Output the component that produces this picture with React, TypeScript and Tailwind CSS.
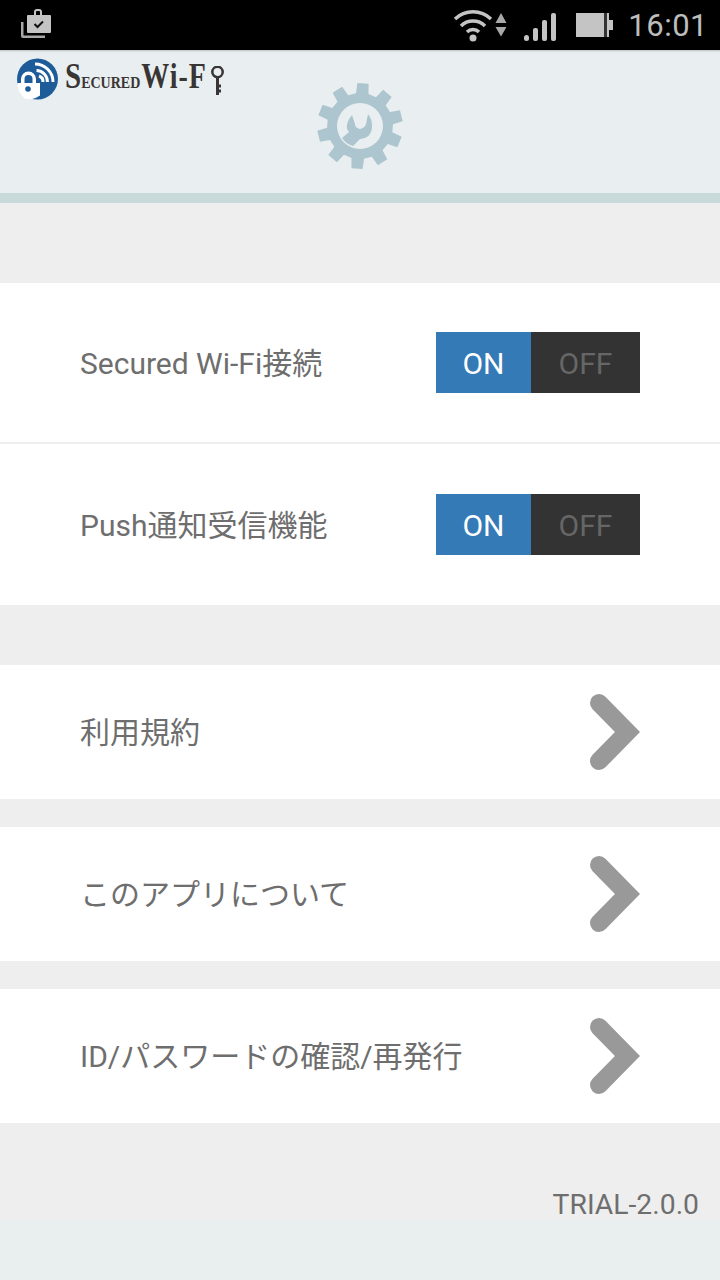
import React from 'react';

const FONT = "font-['Roboto','Noto_Sans_CJK_JP',sans-serif]";

const gearPath = () => {
  const teeth = 10;
  const points: string[] = [];
  for (let i = 0; i < teeth; i++) {
    const a = ((i * 36 + 4 - 90) * Math.PI) / 180;
    const d = (deg: number) => (deg * Math.PI) / 180;
    const at = (r: number, t: number) => `${(44 + r * Math.cos(t)).toFixed(2)} ${(44 + r * Math.sin(t)).toFixed(2)}`;
    points.push(at(33, a - d(11)), at(43, a - d(7.5)), at(43, a + d(7.5)), at(33, a + d(11)));
  }
  return `M${points.join('L')}Z`;
};

const StatusBar = () => (
  <div className="h-[50px] bg-black flex items-center text-[#bdbdbd]">
    <svg className="ml-[20px] w-[32px] h-[32px]" viewBox="0 0 32 32">
      <path d="M1 13v14a2 2 0 0 0 2 2h22v-2.500H3.500V13z" fill="#a8a8a8" />
      <path d="M8 6h6V3a3 3 0 0 1 3-3h2a3 3 0 0 1 3 3v3h8a1 1 0 0 1 1 1v16a1 1 0 0 1-1 1H8a1 1 0 0 1-1-1V7a1 1 0 0 1 1-1zM16 6h4V3a1 1 0 0 0-1-1h-2a1 1 0 0 0-1 1z" fill="#c4c4c4" fillRule="evenodd" />
      <path d="M14.500 15l3 3 5.500-5.500" fill="none" stroke="#111" strokeWidth="2" />
    </svg>
    <div className="ml-auto flex items-center">
      <svg className="w-[40px] h-[34px]" viewBox="0 0 40 34">
        <g fill="none" stroke="#c4c4c4" strokeWidth="3.500">
          <path d="M2 11a26 26 0 0 1 36 0" />
          <path d="M8 18a17 17 0 0 1 24 0" />
          <path d="M14 24a8.500 8.500 0 0 1 12 0" />
        </g>
        <circle cx="20" cy="30" r="3.500" fill="#c4c4c4" />
      </svg>
      <svg className="ml-[1px] w-[14px] h-[26px]" viewBox="0 0 14 26">
        <path d="M7 1l5.500 10H1.500zM1.500 15h11l-5.500 9.500z" fill="#a8a8a8" />
      </svg>
      <svg className="ml-[15px] mt-[4px] w-[34px] h-[28px]" viewBox="0 0 34 28">
        <g fill="#c4c4c4">
          <rect x="1" y="22" width="5" height="6" rx="2.500" />
          <rect x="10" y="15" width="5" height="13" rx="2" />
          <rect x="19" y="7" width="5" height="21" rx="2" />
          <rect x="28" y="0" width="5" height="28" rx="2" />
        </g>
      </svg>
      <svg className="ml-[19px] w-[38px] h-[24px]" viewBox="0 0 38 24">
        <path d="M0 0h33v7h4v10h-4v7H0z" fill="#c4c4c4" />
        <rect x="28" y="0" width="3" height="24" fill="#333" />
      </svg>
      <span className={`ml-[14px] mr-[12px] text-[31px] leading-none tracking-[0.5px] text-[#bdbdbd] ${FONT}`}>16:01</span>
    </div>
  </div>
);

const Logo = () => (
  <div className="pl-[17px] pt-[8px] flex items-start self-start">
    <svg className="w-[41px] h-[42px]" viewBox="0 0 41 42">
      <circle cx="20.500" cy="21" r="20.500" fill="#1d5c99" />
      <path d="M4 28v-7a7.500 7.500 0 0 1 15 0v7h-3.500v-7a4 4 0 0 0-8 0v7z" fill="#fff" />
      <path d="M0.500 25h22.500v12.500a21 21 0 0 1-8 3.500H8.500a21 21 0 0 1-8-13z" fill="#fff" />
      <circle cx="11" cy="31" r="2.800" fill="#1d5c99" />
      <path d="M18 6a18 18 0 0 1 18 18M19.500 12.500a11.500 11.500 0 0 1 11 11.500M22 18a6 6 0 0 1 4 6" fill="none" stroke="#fff" strokeWidth="3" />
    </svg>
    <div className="ml-[7px] mt-[7px] flex items-start">
      <div className="flex items-baseline origin-bottom scale-y-[1.25] font-['Liberation_Serif','DejaVu_Serif',serif] font-bold text-[#3a3535] leading-none whitespace-nowrap">
        <span className="text-[29px]">S</span>
        <span className="text-[14px]">ECURED</span>
        <span className="text-[28px] ml-[1px] tracking-[1px]">Wi-F</span>
      </div>
      <svg className="ml-[3px] mt-[1px] w-[15px] h-[30px]" viewBox="0 0 15 30">
        <circle cx="7.500" cy="6" r="5.200" fill="none" stroke="#3a3535" strokeWidth="2.500" />
        <path d="M7.500 10v19M7.500 20h3.500M7.500 25h3.500" fill="none" stroke="#3a3535" strokeWidth="3" />
      </svg>
    </div>
  </div>
);

const Gear = () => (
  <svg className="w-[88px] h-[88px] mt-[32px]" viewBox="0 0 88 88">
    <path d={gearPath()} fill="#adc5cf" />
    <circle cx="44" cy="44" r="23" fill="#e9eff0" />
    <path d="M36 33Q30 40 31 47L33 50L26 56Q30 62 37 64L44 57Q56 56 56 44Q56 37 52 32L50 42Q49 46 44 47Q39 46 39 42Z" fill="#adc5cf" />
  </svg>
);

const Toggle = () => (
  <div className={`flex w-[204px] h-[61px] text-[30px] ${FONT}`}>
    <div className="w-[95px] pt-[2px] bg-[#337ab7] text-white flex items-center justify-center">ON</div>
    <div className="flex-1 pt-[2px] bg-[#333333] text-[#666666] flex items-center justify-center">OFF</div>
  </div>
);

const ToggleRow = ({ label, divider }: { label: string; divider?: boolean }) => (
  <div className={`h-[161px] bg-white flex items-center justify-between pl-[80px] pr-[80px] ${divider ? 'border-b-2 border-[#eeeeee]' : ''}`}>
    <span className={`mt-[2px] text-[30px] text-[#6e6e6e] ${FONT}`}>{label}</span>
    <Toggle />
  </div>
);

const LinkRow = ({ label }: { label: string }) => (
  <div className="h-[134px] bg-white flex items-center justify-between pl-[80px] pr-[80px]">
    <span className={`text-[30px] text-[#6e6e6e] ${FONT}`}>{label}</span>
    <svg className="w-[50px] h-[78px]" viewBox="0 0 50 78">
      <path d="M9 10l28.500 29-28.500 29" fill="none" stroke="#999999" strokeWidth="18" strokeLinecap="round" />
    </svg>
  </div>
);

export default function App() {
  return (
    <div className="w-[720px] h-[1280px] bg-[#eeeeee] flex flex-col overflow-hidden">
      <StatusBar />
      <div className="h-[153px] bg-[#e9eff0] border-b-[10px] border-[#c9dadb] grid grid-cols-[1fr_88px_1fr] shadow-[inset_0_3px_2px_-2px_rgba(0,0,0,0.2)]">
        <Logo />
        <Gear />
      </div>
      <div className="mt-[80px]">
        <ToggleRow label="Secured Wi-Fi接続" divider />
        <ToggleRow label="Push通知受信機能" />
      </div>
      <div className="mt-[60px] flex flex-col gap-[28px]">
        <LinkRow label="利用規約" />
        <LinkRow label="このアプリについて" />
        <LinkRow label="ID/パスワードの確認/再発行" />
      </div>
      <div className={`h-[97px] flex items-end justify-end pr-[21px] pb-[1px] text-[28.300px] leading-none text-[#6e6e6e] ${FONT}`}>TRIAL-2.0.0</div>
      <div className="flex-1 bg-[#e9eeef]" />
    </div>
  );
}
